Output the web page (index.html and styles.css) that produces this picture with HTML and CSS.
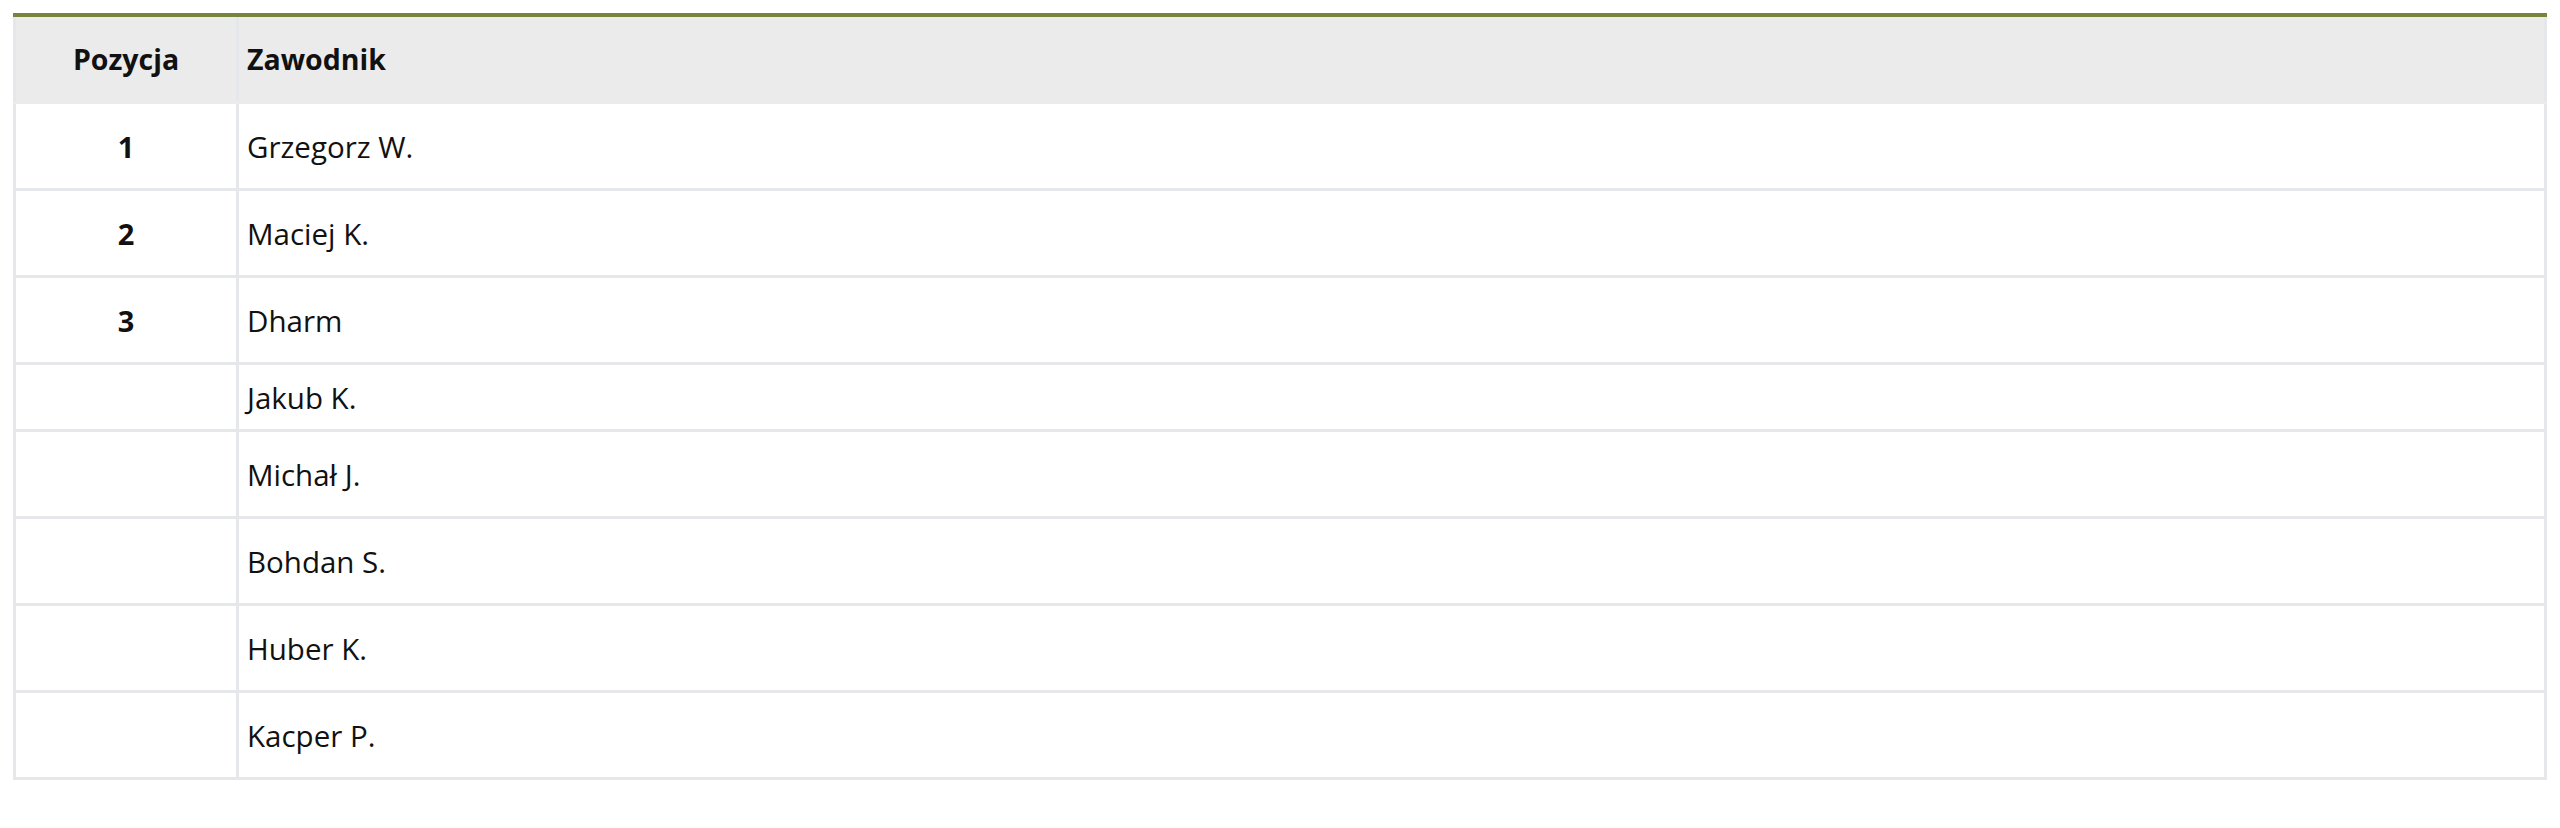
FILE: index.html
```html
<!DOCTYPE html>
<html lang="pl">
<head>
<meta charset="utf-8">
<title>Wyniki</title>
<link rel="stylesheet" href="styles.css">
</head>
<body>
<div class="wrap">
<table class="results">
<thead>
<tr><th class="pos">Pozycja</th><th class="name">Zawodnik</th></tr>
</thead>
<tbody>
<tr><td class="pos">1</td><td class="name">Grzegorz W.</td></tr>
<tr><td class="pos">2</td><td class="name">Maciej K.</td></tr>
<tr><td class="pos">3</td><td class="name">Dharm</td></tr>
<tr class="short"><td class="pos"></td><td class="name">Jakub K.</td></tr>
<tr><td class="pos"></td><td class="name">Michał J.</td></tr>
<tr><td class="pos"></td><td class="name">Bohdan S.</td></tr>
<tr><td class="pos"></td><td class="name">Huber K.</td></tr>
<tr><td class="pos"></td><td class="name">Kacper P.</td></tr>
</tbody>
</table>
</div>
</body>
</html>
```
FILE: styles.css
```css
html, body {
  margin: 0;
  padding: 0;
  background: #ffffff;
}
.wrap {
  padding: 13px 13px 0 13px;
}
.results {
  width: 100%;
  border-collapse: collapse;
  font-family: "Open Sans", "Liberation Sans", sans-serif;
  font-size: 29px;
  color: #111111;
  border: 3px solid #e6e7eb;
  border-top: 4px solid #77843d;
}
.results th, .results td {
  border: 3px solid #e6e7eb;
  vertical-align: middle;
  padding: 0 8px;
}
.results thead th {
  background: #ebebeb;
  font-weight: 700;
  font-size: 28.5px;
  height: 84px;
  border-top: none;
  border-bottom-color: #ebebeb;
}
.results thead th.name { text-align: left; }
.results td { height: 84px; }
.results tr.short td { height: 64px; }
.results .pos {
  width: 204px;
  text-align: center;
  font-weight: 700;
}
.results td.name {
  text-align: left;
  font-weight: 400;
  font-size: 29.5px;
}
```
